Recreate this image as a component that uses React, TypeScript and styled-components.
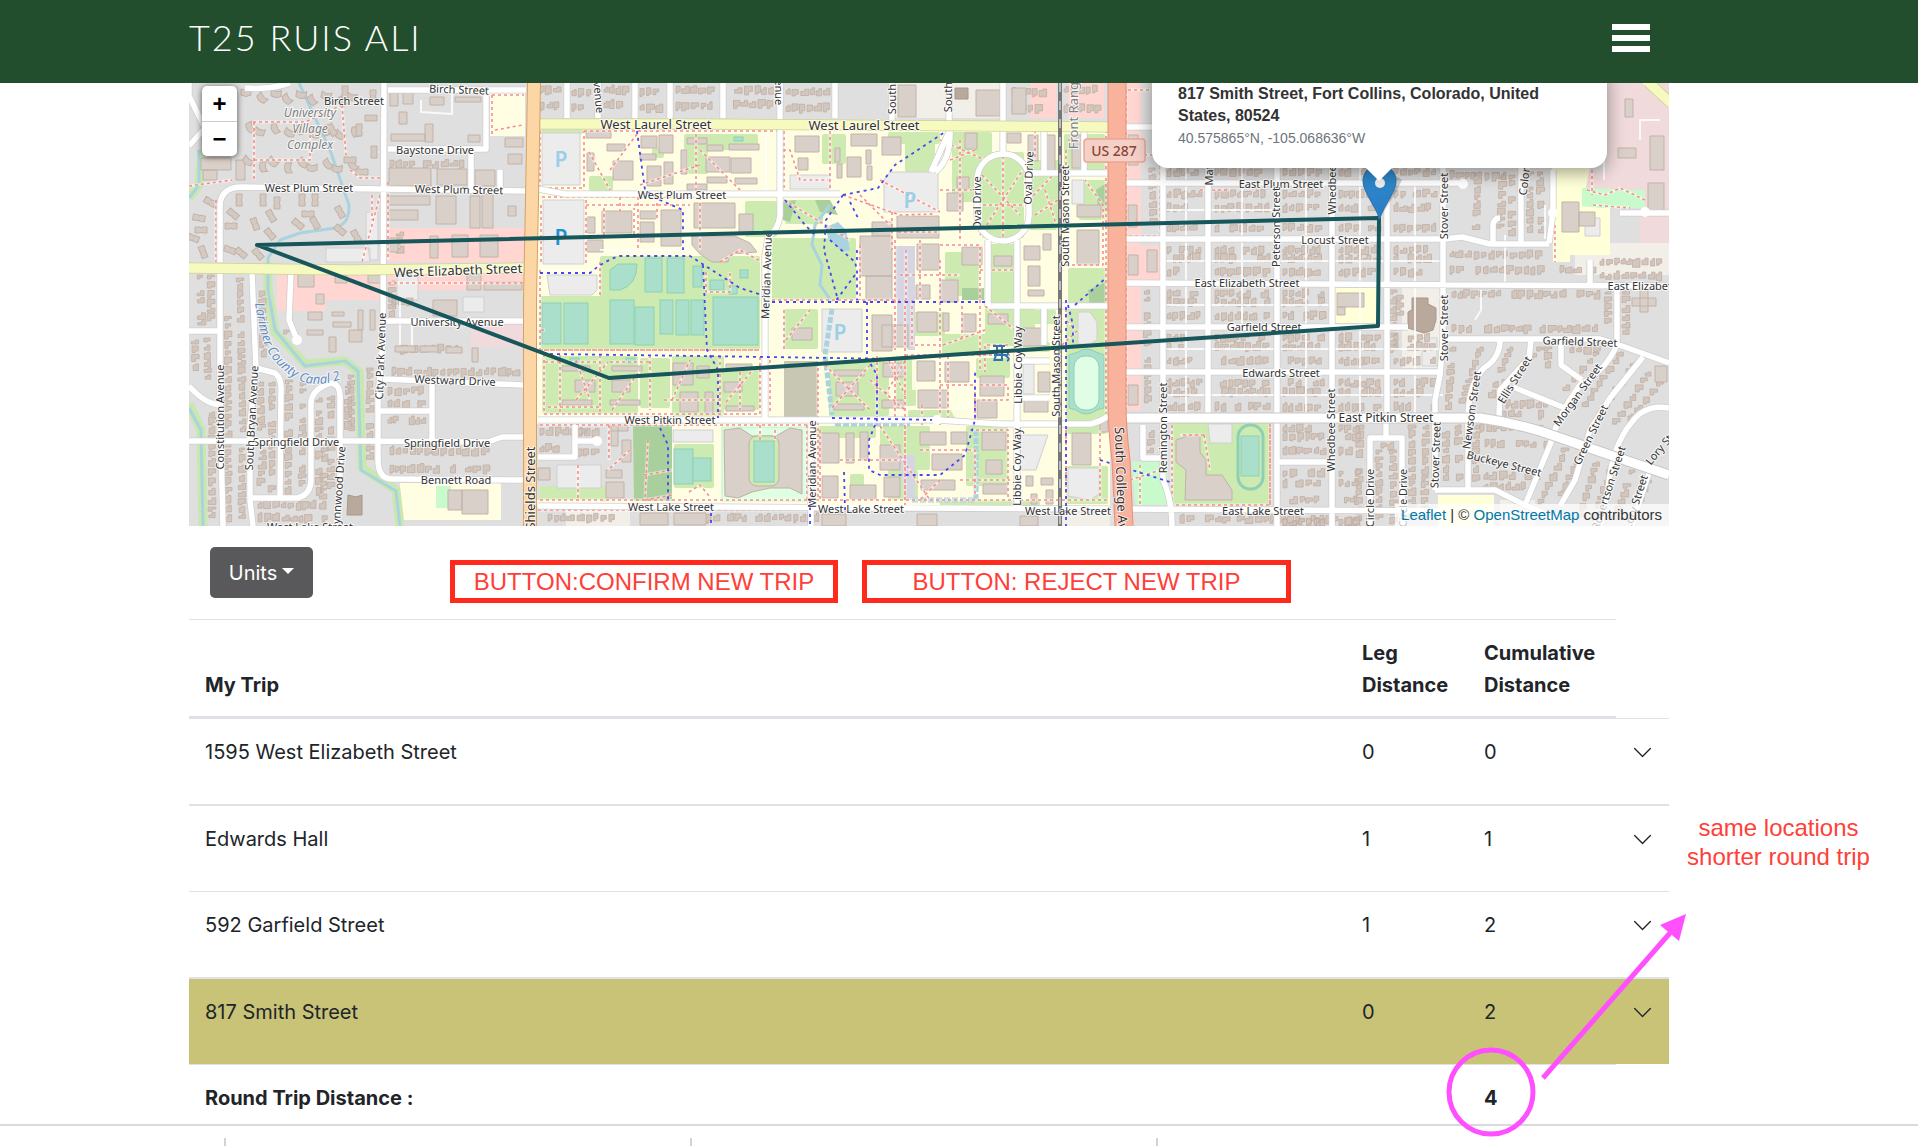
import React from "react";
import styled, { createGlobalStyle, css } from "styled-components";

const GlobalStyle = createGlobalStyle`
  * { box-sizing: border-box; }
  body {
    margin: 0;
    background: #fff;
    color: #212529;
    font-family: Inter, "Liberation Sans", sans-serif;
    font-size: 20px;
    line-height: 32px;
    overflow: hidden;
  }
`;

const gutters = css`
  padding-left: 189px;
  padding-right: 249px;
`;

const Page = styled.div`
  display: flex;
  flex-direction: column;
`;

const Header = styled.header`
  ${gutters}
  display: flex;
  align-items: flex-start;
  justify-content: space-between;
  height: 83px;
  padding-top: 16px;
  background: #224e2d;
  color: #fff;
`;

const Title = styled.h1`
  margin: 0;
  font-family: Lato, "Open Sans", sans-serif;
  font-size: 36px;
  line-height: 42px;
  font-weight: 300;
  letter-spacing: 2px;
`;

const MenuButton = styled.button`
  display: flex;
  flex-direction: column;
  gap: 5px;
  margin: 8px 19px 0 0;
  padding: 0;
  border: 0;
  background: none;
`;

const MenuBar = styled.span`
  width: 38px;
  height: 6px;
  background: #fff;
`;

const Content = styled.main`
  ${gutters}
  display: flex;
  flex-direction: column;
`;

/* ---------- map ---------- */

const MapFrame = styled.section`
  position: relative;
  height: 443px;
  overflow: hidden;
  background: #dfdfdf;
  font-family: "Liberation Sans", Arial, sans-serif;
`;

const MapDrawing = styled.svg`
  display: block;
  width: 100%;
  height: 100%;
`;

const ZoomControl = styled.div`
  position: absolute;
  top: 3px;
  left: 13px;
  display: flex;
  flex-direction: column;
  width: 35px;
  border-radius: 5px;
  background: #fff;
  box-shadow: 0 1px 6px rgba(0, 0, 0, 0.65);
`;

const ZoomButton = styled.button`
  height: 35px;
  padding: 0;
  border: 0;
  background: none;
  color: #000;
  font: bold 24px/34px "Liberation Sans", Arial, sans-serif;

  & + & {
    border-top: 1px solid #ccc;
  }
`;

const Popup = styled.div`
  position: absolute;
  top: -18px;
  right: 62px;
  width: 455px;
  height: 103px;
  padding: 18px 26px 0;
  border-radius: 16px;
  background: #fff;
  box-shadow: 0 4px 18px rgba(0, 0, 0, 0.4);
`;

const PopupTip = styled.svg`
  position: absolute;
  top: 102px;
  left: 213px;
  width: 28px;
  height: 15px;
  fill: #fff;
`;

const PopupClose = styled.button`
  position: absolute;
  top: 3px;
  right: 9px;
  padding: 0;
  border: 0;
  background: none;
  color: #c3c3c3;
  font: bold 20px/18px "Liberation Sans", Arial, sans-serif;
`;

const Address = styled.p`
  margin: 0;
  color: #333;
  font-size: 16px;
  line-height: 22px;
  font-weight: 700;
`;

const Coordinates = styled.p`
  margin: 0;
  color: #6c757d;
  font-size: 14px;
  line-height: 22px;
`;

const Attribution = styled.div`
  position: absolute;
  right: 0;
  bottom: 0;
  padding: 0 7px 0 6px;
  background: rgba(255, 255, 255, 0.7);
  color: #333;
  font-size: 15px;
  line-height: 22px;
`;

const MapLink = styled.a`
  color: #0078a8;
  text-decoration: none;
`;

const StreetLabel = styled.text<{ $size: number }>`
  font-family: "Noto Sans", sans-serif;
  font-size: ${(p) => p.$size}px;
  fill: #333;
  stroke: rgba(255, 255, 255, 0.75);
  stroke-width: 2px;
  paint-order: stroke;
  text-anchor: middle;
  dominant-baseline: central;
`;

const AreaLabel = styled(StreetLabel)<{ $upright?: boolean }>`
  fill: #808080;
  font-style: ${(p) => (p.$upright ? "normal" : "italic")};
`;

const WaterLabel = styled.text`
  font-family: "Noto Sans", sans-serif;
  font-size: 13px;
  font-style: italic;
  fill: #5f8fc4;
  stroke: rgba(255, 255, 255, 0.7);
  stroke-width: 2px;
  paint-order: stroke;
`;

const ParkingLabel = styled.text<{ $strong?: boolean }>`
  font-family: "Noto Sans", sans-serif;
  font-size: 21px;
  font-weight: 600;
  fill: ${(p) => (p.$strong ? "#1b93d6" : "#9bcfe8")};
  text-anchor: middle;
  dominant-baseline: central;
`;

const ShieldLabel = styled.text`
  font-family: "Noto Sans", sans-serif;
  font-size: 14px;
  font-weight: 500;
  fill: #8b4438;
  text-anchor: middle;
  dominant-baseline: central;
`;

type Box = [number, number, number, number];

const random = (seed: number) => {
  let s = seed;
  return () => {
    s = (s * 16807) % 2147483647;
    return s / 2147483647;
  };
};

const rectPath = (x: number, y: number, w: number, h: number) =>
  `M${x.toFixed(1)} ${y.toFixed(1)}h${w.toFixed(1)}v${h.toFixed(1)}h${(-w).toFixed(1)}z`;

const housePath = (x: number, y: number, w: number, h: number, r: () => number) => {
  const n = 1 + r() * Math.min(w, h) * 0.35;
  return r() > 0.5
    ? `M${x.toFixed(1)} ${y.toFixed(1)}h${w.toFixed(1)}v${(h - n).toFixed(1)}h${(-w / 2).toFixed(1)}v${n.toFixed(1)}h${(-w / 2).toFixed(1)}z`
    : `M${x.toFixed(1)} ${(y + n).toFixed(1)}h${(w / 2).toFixed(1)}v${(-n).toFixed(1)}h${(w / 2).toFixed(1)}v${h.toFixed(1)}h${(-w).toFixed(1)}z`;
};

/* A row of houses that runs across. */
const houseRow = (x0: number, x1: number, y: number, seed: number) => {
  const r = random(seed);
  let d = "";
  for (let x = x0; x < x1 - 5; ) {
    const w = 4 + r() * 4;
    const h = 5 + r() * 4;
    if (r() > 0.1) d += housePath(x, y - h / 2 + (r() - 0.5) * 2, Math.min(w, x1 - x), h, r);
    x += w + 1 + r() * 2;
  }
  return d;
};

/* A column of houses that follows a street from top to bottom. */
const houseColumn = (xa: number, y0: number, xb: number, y1: number, seed: number) => {
  const r = random(seed);
  let d = "";
  for (let y = y0; y < y1 - 5; ) {
    const h = 4 + r() * 4;
    const w = 5 + r() * 3;
    const x = xa + ((xb - xa) * (y - y0)) / (y1 - y0);
    if (r() > 0.08) d += housePath(x - w / 2, y, w, h, r);
    y += h + 1 + r() * 2;
  }
  return d;
};

const cityBlocks = (xs: number[], ys: number[]): Box[] =>
  ys.slice(1).flatMap((y, j) =>
    xs.slice(1).map((x, i): Box => [xs[i] + 4, ys[j] + 4, x - xs[i] - 8, y - ys[j] - 8])
  );

const eastBlocks = cityBlocks([1160, 1208, 1276, 1332, 1387, 1443], [83, 127, 183, 239, 283, 327, 372, 418]).filter(
  ([x, y]) => !(x === 1336 && y === 287) && !(x === 1391 && y === 287)
);
const southBlocks = cityBlocks([1276, 1332, 1369], [418, 462, 511, 540]);

const blockHouses = (blocks: Box[]) =>
  blocks
    .map(([x, y, w, h], i) =>
      houseRow(x + 3, x + w - 2, y + 7, i * 37 + 11) +
      houseRow(x + 3, x + w - 2, y + h / 2 - 3, i * 19 + 83) +
      houseRow(x + 3, x + w - 2, y + h - 7, i * 53 + 29)
    )
    .join("");

/* [start x, start y, end x, end y] */
const columns: Box[] = [
  [211, 275, 211, 322], [200, 275, 202, 326], [207, 338, 208, 380], [195, 340, 196, 375], [212, 412, 212, 520],
  [228, 310, 228, 524], [240, 278, 243, 436], [242, 448, 242, 524], [262, 285, 264, 360], [260, 382, 262, 436],
  [263, 450, 260, 492], [272, 382, 272, 492], [289, 380, 288, 492], [303, 382, 302, 490], [319, 398, 319, 494],
  [331, 396, 331, 492], [348, 384, 348, 435], [370, 368, 370, 472], [325, 448, 322, 520], [351, 375, 352, 436],
  [392, 281, 392, 316], [400, 232, 400, 256], [208, 102, 208, 140], [287, 330, 289, 340], [1393, 290, 1393, 362], [1400, 290, 1400, 320],
  [1480, 347, 1458, 410], [1452, 347, 1448, 410], [1510, 347, 1484, 410], [1540, 347, 1500, 385],
  [1548, 347, 1548, 372], [1596, 352, 1560, 392], [1620, 352, 1578, 412], [1634, 362, 1592, 420],
  [1648, 372, 1610, 428], [1660, 382, 1622, 424], [1565, 448, 1536, 510], [1580, 455, 1556, 500],
  [1596, 462, 1578, 520], [1612, 464, 1592, 524], [1632, 470, 1612, 524], [1648, 480, 1628, 524], [1446, 425, 1446, 484],
  [1458, 425, 1460, 484], [1476, 425, 1476, 484], [1360, 425, 1358, 524], [1379, 450, 1379, 524], [1393, 450, 1394, 524],
  [1412, 425, 1412, 524], [1426, 425, 1424, 524], [1478, 172, 1476, 230], [1503, 175, 1500, 232],
  [1512, 175, 1512, 235], [1530, 172, 1530, 232], [1540, 172, 1542, 236], [1608, 290, 1608, 328], [1626, 290, 1626, 340],
  [1147, 290, 1148, 408], [1152, 168, 1154, 232], [1152, 425, 1150, 455],
];

/* [start x, end x, y] */
const rows: [number, number, number][] = [
  [392, 520, 372], [388, 428, 391], [388, 430, 404], [388, 428, 420], [390, 492, 451], [390, 490, 469],
  [395, 462, 349], [258, 320, 505], [258, 330, 518], [390, 466, 164], [1452, 1600, 329], [1452, 1600, 294],
  [1450, 1546, 255], [1450, 1546, 270], [1560, 1600, 270], [1600, 1666, 262], [1600, 1666, 276],
  [1480, 1545, 428], [1485, 1550, 444], [1484, 1540, 476], [1484, 1530, 486], [1506, 1556, 404], [1502, 1548, 414],
  [1375, 1400, 446], [1570, 1606, 349], [1450, 1480, 175], [1485, 1512, 176], [540, 590, 432], [540, 560, 448],
  [578, 604, 432], [578, 604, 452], [548, 620, 518], [690, 820, 518], [1180, 1340, 519], [392, 420, 302],
  [540, 564, 90], [572, 594, 92], [604, 630, 90], [640, 666, 92], [676, 718, 90], [728, 774, 90], [786, 830, 92],
  [540, 564, 106], [572, 594, 108], [604, 630, 104], [640, 666, 108], [676, 718, 106], [728, 774, 104], [786, 830, 108],
  [1064, 1104, 90], [1064, 1104, 108], [1012, 1050, 92], [1012, 1050, 108],
];

const neighbourhoodHouses =
  columns.map(([a, b, c, d], i) => houseColumn(a, b, c, d, i * 71 + 13)).join("") +
  rows.map(([a, b, y], i) => houseRow(a, b, y, i * 97 + 7)).join("") +
  blockHouses(eastBlocks) +
  blockHouses(southBlocks);

const campusBuildings: Box[] = [
  [586, 131, 25, 7], [607, 144, 18, 7], [613, 161, 20, 19], [587, 153, 7, 18], [641, 136, 16, 12], [659, 135, 14, 18],
  [640, 154, 16, 6], [647, 166, 14, 20], [664, 162, 9, 22], [687, 138, 20, 6], [681, 150, 6, 24], [706, 157, 24, 15],
  [731, 158, 20, 15], [707, 145, 16, 6], [729, 144, 30, 6], [707, 177, 20, 6], [735, 178, 22, 6], [687, 184, 20, 6],
  [602, 211, 30, 22], [587, 217, 8, 16], [640, 211, 16, 8], [640, 222, 14, 20], [661, 210, 20, 36], [694, 203, 41, 25],
  [739, 214, 14, 18], [587, 240, 16, 12], [795, 136, 24, 16], [798, 158, 10, 12], [851, 134, 26, 12], [847, 157, 14, 20],
  [835, 148, 5, 14], [866, 150, 5, 14], [837, 164, 5, 14], [867, 166, 5, 14],
  [882, 137, 19, 18], [872, 222, 20, 14], [860, 236, 32, 40], [866, 276, 26, 24], [897, 216, 42, 22],
  [562, 366, 28, 5], [575, 380, 20, 12], [612, 366, 30, 5], [612, 380, 18, 12], [562, 400, 30, 5], [610, 400, 30, 5],
  [673, 363, 20, 22], [697, 366, 12, 12], [680, 392, 18, 20], [705, 392, 8, 22], [724, 382, 18, 10], [726, 364, 26, 5],
  [726, 406, 28, 5], [792, 328, 20, 12], [872, 315, 20, 36], [834, 370, 30, 6], [836, 382, 22, 14], [834, 404, 30, 6],
  [883, 363, 22, 14], [882, 400, 22, 8], [819, 433, 20, 30], [846, 433, 8, 30], [860, 432, 8, 28], [880, 445, 20, 25],
  [822, 476, 16, 22], [850, 485, 26, 14], [884, 477, 16, 20], [610, 425, 18, 6], [622, 440, 9, 22], [611, 426, 7, 20],
  [606, 470, 16, 8], [606, 482, 18, 16], [538, 468, 12, 12], [640, 513, 28, 12], [674, 513, 32, 12], [822, 514, 24, 12],
  [898, 85, 18, 32], [976, 90, 24, 26], [1012, 88, 14, 26], [917, 244, 22, 26], [940, 280, 18, 22], [916, 285, 14, 14],
  [965, 133, 12, 16], [1007, 133, 14, 10], [1028, 135, 10, 26], [1046, 135, 9, 36], [1072, 135, 9, 33], [957, 177, 12, 12],
  [947, 193, 16, 18], [1024, 246, 16, 14], [1028, 266, 12, 20], [1028, 290, 16, 6], [1043, 234, 8, 16], [1077, 230, 22, 35],
  [994, 256, 18, 10], [962, 247, 20, 18], [882, 325, 26, 22], [917, 312, 20, 20], [943, 313, 6, 18], [962, 314, 14, 18],
  [988, 314, 20, 10], [917, 361, 18, 20], [945, 362, 24, 20], [980, 376, 24, 20], [918, 390, 30, 18], [977, 400, 20, 18],
  [1020, 328, 26, 18], [1024, 400, 24, 12], [1038, 372, 12, 20], [920, 432, 26, 13], [951, 432, 16, 12], [982, 432, 24, 18],
  [932, 454, 30, 16], [986, 460, 16, 14], [1072, 433, 19, 32], [921, 480, 34, 10], [983, 484, 24, 10], [1026, 476, 7, 10],
  [1041, 478, 12, 7], [1031, 494, 6, 10], [1046, 490, 7, 14], [917, 514, 20, 12], [1020, 516, 18, 10],
  [1100, 420, 8, 12], [1077, 205, 24, 12], [1128, 135, 10, 30], [1128, 205, 9, 22], [1128, 255, 10, 20], [1128, 385, 10, 20],
  [1147, 250, 10, 22], [1337, 293, 27, 14], [1337, 307, 8, 8], [1562, 202, 17, 30], [1579, 212, 16, 14],
  [1625, 99, 8, 18], [1650, 136, 14, 34], [1648, 183, 16, 30], [1618, 148, 18, 10], [1632, 298, 24, 8], [1640, 290, 8, 22],
  [1655, 366, 12, 16], [201, 158, 30, 12], [203, 170, 14, 10], [236, 160, 9, 20], [389, 168, 42, 18], [437, 169, 30, 16],
  [475, 170, 20, 16], [388, 196, 42, 9], [436, 196, 20, 28], [470, 196, 10, 32], [482, 194, 11, 34], [388, 210, 30, 10],
  [390, 88, 8, 18], [403, 88, 10, 16], [430, 97, 14, 8], [455, 97, 26, 5], [399, 112, 8, 12], [425, 124, 8, 18],
  [391, 134, 34, 7], [468, 135, 12, 7], [505, 138, 18, 9], [508, 154, 14, 10], [508, 206, 8, 10], [433, 300, 24, 16],
  [467, 274, 14, 16], [484, 282, 38, 8], [332, 312, 12, 4], [333, 322, 18, 5], [308, 312, 14, 8], [307, 330, 16, 5],
  [329, 337, 7, 15], [349, 330, 13, 12], [358, 310, 5, 20], [370, 310, 5, 20], [395, 346, 20, 6], [420, 346, 18, 6],
  [446, 347, 16, 6], [472, 348, 6, 14], [480, 235, 18, 22], [452, 235, 16, 22], [430, 236, 8, 22], [388, 238, 10, 14],
  [448, 490, 14, 20], [462, 490, 26, 24], [298, 274, 16, 13], [335, 275, 12, 8], [368, 275, 14, 8], [316, 294, 8, 10],
];

/* Curved apartment buildings of the student village. */
const villageBuildings = Array.from({ length: 27 }, (_, i): [number, number, number] => [
  246 + (i % 9) * 13 + ((i * 7) % 5),
  94 + Math.floor(i / 9) * 34 + ((i * 5) % 9),
  (i * 47) % 90,
]);
const clusterBuildings: [number, number, number][] = [
  [210, 202, 30], [199, 218, 10], [201, 230, 0], [193, 238, 20], [239, 200, 90], [233, 214, 40], [231, 226, 0], [263, 200, 90],
  [277, 203, 90], [271, 216, 60], [255, 224, 70], [270, 234, 50], [302, 200, 90], [315, 200, 90], [308, 214, 0], [298, 224, 40],
  [315, 223, 60], [340, 212, 60], [230, 250, 20], [241, 253, 40], [258, 254, 50], [203, 252, 70], [340, 230, 40], [356, 236, 60],
  [350, 160, 0], [359, 130, 90], [371, 118, 0], [373, 96, 90], [332, 130, 60], [362, 172, 0], [374, 152, 90], [345, 92, 90],
];

const lawns: Box[] = [
  [540, 296, 220, 54], [600, 256, 160, 42], [772, 238, 84, 62], [785, 200, 38, 24], [589, 176, 24, 15], [745, 201, 32, 36],
  [684, 134, 74, 16], [688, 148, 20, 26], [652, 148, 12, 10], [540, 130, 44, 4], [542, 356, 96, 58], [640, 358, 30, 50],
  [672, 356, 52, 60], [724, 370, 36, 40], [784, 309, 34, 40], [829, 362, 60, 54], [822, 134, 24, 30], [888, 132, 52, 12],
  [905, 142, 30, 30], [952, 132, 40, 70], [982, 152, 42, 86], [1029, 160, 30, 70], [1064, 134, 42, 40], [1079, 180, 28, 40],
  [1068, 268, 40, 38], [945, 252, 34, 44], [990, 244, 26, 60], [905, 312, 40, 24], [942, 334, 48, 22], [985, 306, 50, 40],
  [1066, 308, 42, 112], [674, 444, 40, 44], [880, 426, 50, 44], [816, 426, 60, 12], [966, 426, 42, 60], [1066, 466, 42, 38],
  [1030, 310, 26, 14], [908, 410, 60, 12], [976, 358, 34, 20], [896, 356, 20, 50], [602, 486, 4, 16], [540, 486, 62, 14],
  [940, 500, 100, 6], [1020, 342, 30, 10], [888, 470, 30, 30], [850, 474, 14, 24], [1172, 423, 98, 82], [1066, 420, 40, 14],
];

const pitches: Box[] = [
  [645, 258, 17, 34], [667, 258, 17, 35], [693, 266, 9, 21], [542, 303, 19, 41], [564, 303, 24, 41], [610, 300, 24, 44],
  [635, 307, 19, 38], [660, 300, 13, 34], [676, 300, 13, 35], [691, 300, 13, 35], [713, 297, 45, 48], [674, 449, 19, 35],
  [693, 458, 18, 23], [570, 358, 9, 5], [626, 358, 9, 5], [710, 280, 14, 10], [729, 286, 8, 8], [734, 137, 9, 4],
  [740, 270, 8, 8],
];

const minorRoads = [
  "M220 262V205Q221 188 240 187L525 191", "M189 83V96L205 128 189 146M245 88Q270 90 290 83", "M220 270V400L223 526",
  "M384 83L383 340 378 400V462Q379 479 392 479L524 480", "M388 90H526M388 149H486V90M471 149V190M500 170V190",
  "M252 273L256 368 250 425V500L253 526M256 368L275 373Q282 378 281 392L280 497M252 498H298Q311 494 311 480V402Q313 388 331 383 341 384 340 400V480L336 526",
  "M189 441H378L488 442 502 437H524M189 331H220M189 386Q205 404 220 405M386 321H524M383 379L524 385M378 411H432M432 382V441M291 270L289 320 297 340",
  "M567 83V118M598 83V118M635 83V118M670 83V118M723 83V118M780 83V215Q779 228 768 238L765 255V420M835 83V118M892 83V120M949 83V122M1003 83V152",
  "M538 189L565 194H840M538 420H937L1000 424H1090Q1100 422 1108 416M538 506L1108 509M811 421V526",
  "M977 180A26 26 0 0 1 1029 180V215A26 26 0 0 1 977 215ZM1044 130V173M1084 130V173M1029 173H1108M988 240V306M1017 240V509M988 306H1108M931 172L949 132M935 172Q951 160 950 130",
  "M1126 127H1160M1163 83V480Q1172 500 1172 526M1208 83V418M1277 83V526M1332 83V526M1387 83V418M1443 83V339L1440 375 1435 400V490",
  "M1126 183H1463M1126 239H1444L1462 237 1490 244H1549M1126 283L1669 286M1126 327H1408M1126 372H1440M1275 462H1332M1126 509L1440 511M1143 425V458H1160",
  "M1443 339H1600L1625 347 1669 363M1617 285V345M1500 340Q1500 358 1484 368 1468 385 1468 420V490M1531 340L1529 358 1500 390 1499 416M1513 387L1565 408M1617 345Q1606 370 1580 385 1558 415 1550 445L1525 505M1561 342V365L1582 380",
  "M1643 357L1610 398 1590 430 1575 480 1560 506M1669 408Q1645 404 1632 422 1612 445 1608 490L1600 526M1650 470L1640 500 1632 526M1435 490H1495L1525 505 1560 520M1370 526V438H1402V526M1386 418V438",
  "M1521 168V243M1493 243V225Q1494 218 1500 218M1553 170V212L1549 243M1590 260V285M1620 213H1669",
  "M538 457H575V425M575 441H597M1044 306V345M1020 361H1050M1020 398H1050",
].join("");

const lanes =
  "M1160 155H1277M1160 210H1277M1160 261H1443M1160 305H1332M1160 349H1443M1160 395H1443M1186 83V418M1242 127V327M1306 83V418M1360 83V418M1415 183V418M1505 235V283M1481 290V310L1475 320M421 100V112L452 114V90M540 270H584M688 195V250H600M766 130V190M400 300V345M412 320V345M1545 205V239M1604 110V180M1640 140V120H1660";

const footways = [
  "M540 131V188H584V131M542 197H690M586 200V265M540 270V350H760M540 350H765M544 354V414H760V356M584 131H780M620 197V212M638 197V250M657 197V220M696 134V190M589 152L610 190M610 170L640 130M640 185L700 165M700 150L740 190",
  "M784 131V190M784 200L850 240M783 150H790L800 180H828M830 131V190M843 195L900 215 935 214M860 195L890 225M880 180L940 212M892 212V250M895 240V350M772 300H900M860 245V300",
  "M560 355V412M576 360L590 400M600 355V412M576 400L608 362M612 410L640 370M650 355V410M672 400L690 360M664 400H720M720 356V412M740 372V410M726 402L756 366M784 310V350M786 340L810 310M818 362V500M770 360V412",
  "M825 365L870 410M870 365L830 410M877 356V425M889 361L905 395M905 361L885 395M905 300V500M905 355H1010M940 260V425M980 300V370M962 306V340M940 385H975V425M905 420H935",
  "M1003 150V243M977 205H1029M980 235L1026 165M982 175L1020 215M1029 200L1058 170M960 140V240M940 190H977M1035 130V160M1045 190L1058 230M940 245H980V300M920 240V300M980 270H1015M900 275H960",
  "M1066 265H1103V205L1085 180M1066 303V320L1075 330M1062 345L1078 330M1106 130V415M1126 90V410M1129 236H1162M1129 285H1200M1160 130V232M1126 155H1160",
  "M820 430V500M840 460H900M880 426L930 500M905 425V505M920 450H975V495M960 480H1010M970 430H1008V500M1020 426V500M1066 430V500H1100V430M940 480L920 500",
  "M540 500H1108M538 510H1108M540 425H815M648 440L645 500 672 495M644 475L672 470M689 492L700 485 710 497M578 465V500M807 425V500M609 425V460M630 450L608 470",
  "M541 205V262M586 205H690M604 208V236H634V208M700 197V250M720 262L740 250 762 262M706 272V292H730V272M600 262V295M775 430V440M760 425V440M898 232H940M906 250V300M912 300V345H940M943 345L985 330M985 306L1015 330M1008 345H985V372",
  "M940 140L985 160M950 160L975 150M1035 215L1058 200M1068 140H1100M1070 225H1100M1066 150V172M895 360V420M870 380L905 410M948 356V420M980 385H1008V400H980M922 405V425M545 362H600M610 362H650M548 407H600",
  "M1172 425V505H1270V425M1204 435H1180M1204 435L1210 470M1130 480L1160 470M1140 465V505M1200 190L1230 190",
  "M189 186L232 180M253 122H305L342 105M254 122V180M254 160H310V130M342 105L346 155M350 170L360 178H384M216 200V262M388 182V260M380 195L368 240 362 262M388 283H524M372 195V220M492 95H524M492 95V136M495 130L523 125",
  "M525 420V520M541 330H545M1587 190L1605 195 1620 188 1645 200M1593 205L1630 208M1592 170V195M1555 225V262M1270 424V505M1128 90H1150M388 90H430",
].join("");

const cycleways = [
  "M540 273L590 273Q605 260 620 256H690L740 288 765 296M703 265L707 350 718 370V418M550 354L700 356 900 359M637 131L645 190 660 200 683 210V250M785 200L805 225 815 235",
  "M843 195L826 220 824 250 838 300M850 202L858 218M830 240L855 262 857 270V300M857 250V262M855 275L835 302M772 302H985",
  "M843 195L878 188 895 165 945 132M867 302V358L877 375V420L869 440V470L880 475H940L965 455 975 420V370M832 418L937 420M660 428L668 445V500M711 506V526M844 472L845 510M1066 300V526M1068 305L1073 325V345L1066 350M1075 305L1106 278M1100 460L1170 482M810 500V526",
].join("");

/* Name, centre, angle and, where it is not 11, type size. */
const streetNames: [string, number, number, number, number?][] = [
  ["Birch Street", 354, 101, 0], ["Birch Street", 459, 90, 2], ["West Plum Street", 309, 188, 0],
  ["West Plum Street", 459, 190, 1], ["Baystone Drive", 435, 150, 0], ["West Elizabeth Street", 458, 271, -2, 13],
  ["University Avenue", 457, 322, 0], ["Westward Drive", 455, 381, 2], ["Springfield Drive", 296, 442, 0],
  ["Springfield Drive", 447, 443, 0], ["Bennett Road", 456, 480, 0], ["Constitution Avenue", 220, 417, -90],
  ["South Bryan Avenue", 252, 418, -87], ["City Park Avenue", 381, 356, -88], ["Lynnwood Drive", 339, 488, -86],
  ["Shields Street", 531, 488, -90, 13], ["West Lake Street", 310, 527, 0], ["Avenue", 598, 94, 85], ["Avenue", 778, 86, 90],
  ["West Laurel Street", 656, 125, 0, 13], ["West Laurel Street", 864, 126, 0, 13], ["West Plum Street", 682, 195, 0],
  ["South", 892, 99, -90], ["South", 948, 97, -90], ["Meridian Avenue", 767, 275, -88], ["West Pitkin Street", 670, 420, 0],
  ["West Lake Street", 671, 507, 0], ["Meridian Avenue", 812, 464, -90], ["West Lake Street", 861, 509, 0],
  ["Oval Drive", 977, 203, -90], ["Oval Drive", 1029, 178, -88], ["South Mason Street", 1065, 216, -90],
  ["South Mason Street", 1056, 366, -90], ["Mathews", 1209, 162, -90], ["East Plum Street", 1281, 184, 0],
  ["Peterson Street", 1276, 227, -90], ["Whedbee", 1332, 190, -90], ["Locust Street", 1335, 240, 0],
  ["East Elizabeth Street", 1247, 283, 0], ["East Elizabeth Street", 1660, 286, 0], ["Stover Street", 1444, 206, -90],
  ["Stover Street", 1444, 328, -90], ["Colorado", 1526, 172, -83], ["Libbie Coy Way", 1018, 365, -90],
  ["Libbie Coy Way", 1017, 467, -90], ["West Lake Street", 1068, 511, 0], ["South College Avenue", 1121, 494, 88, 13],
  ["Remington Street", 1163, 428, -90], ["Edwards Street", 1281, 373, 0], ["Garfield Street", 1264, 327, 0],
  ["East Lake Street", 1263, 511, 0], ["Garfield Street", 1580, 342, 2], ["East Pitkin Street", 1386, 418, 0, 12],
  ["Whedbee Street", 1331, 430, -90], ["Newsom Street", 1472, 410, -82], ["Ellis Street", 1515, 380, -58],
  ["Morgan Street", 1578, 395, -54], ["Green Street", 1591, 435, -64], ["Buckeye Street", 1504, 464, 14],
  ["Stover Street", 1436, 455, -88], ["Circle Drive", 1370, 498, -90], ["Circle Drive", 1403, 498, -90],
  ["Robertson Street", 1609, 488, -72], ["Lory Street", 1666, 442, -50], ["Lory Street", 1636, 502, -72],
];

const CampusMap = () => (
  <MapDrawing viewBox="189 83 1480 443" preserveAspectRatio="xMidYMid slice" role="img" aria-label="Map of the trip">
    <defs>
      <linearGradient id="pin" x1="0" y1="0" x2="0" y2="1">
        <stop offset="0" stopColor="#2e8bc9" />
        <stop offset="1" stopColor="#2a7cc6" />
      </linearGradient>
      <path id="canalText" d="M255 303Q260 338 268 352 282 374 306 383 330 387 354 373" />
    </defs>

    <rect x="189" y="83" width="1480" height="443" fill="#dfdfdf" />

    {/* land use */}
    <path fill="#fffee3" d="M536 130H1110V506H536ZM490 93H525V136H490ZM400 483H501V520H400Z" />
    <path fill="#dfdfdf" d="M536 424H634V500H536Z" />
    <path fill="#f2efe9" d="M566 510H630V526H566ZM1062 512H1110V526H1062ZM895 83H1000V118H895ZM1402 288H1440V368H1402ZM1575 243H1669V275H1575ZM1500 500H1535V526H1500Z" />
    <path fill="#ffd6d1" d="M277 273H325V290L326 311H277ZM325 273H383V300H325ZM386 228H525V262H386ZM388 273H524V290H388ZM1127 83H1141V410H1127ZM1141 246H1160V280H1141ZM1030 83H1056V118H1030ZM1068 83H1104V118H1068Z" />
    <path fill="#f0dadb" d="M471 321H524V347H471ZM1607 83H1669V243H1640V208H1582V172H1607Z" />
    <path fill="#ffffd8" d="M1552 168H1590L1582 206 1610 208V255H1570V262H1553ZM1335 288H1380V323H1335ZM1438 495H1494V526H1438Z" />
    <path fill="#c8facc" d="M1582 188L1645 190V208H1600L1582 206ZM1132 462H1168V505H1135ZM436 486H451V508H436Z" />
    {lawns.map(([x, y, w, h], i) => (
      <rect key={i} x={x} y={y} width={w} height={h} rx="2" fill="#cdebb0" />
    ))}
    <path fill="#a9cf9c" d="M633 425H672V501H634ZM783 202L796 200 790 222 783 220ZM815 200L830 200 838 215 820 212ZM1096 190L1108 182V212L1098 208ZM962 288H984V300H962ZM1088 290L1106 282V306H1090Z" />
    <path fill="#c7c7b4" d="M784 361H818V417H784Z" />
    <path fill="#ffffe5" d="M858 190L880 190 890 212 870 205ZM690 488H714V500H690ZM912 338L980 384 976 420 955 418 940 390H912Z" opacity=".9" />
    <path fill="#d5d6e2" d="M895 246H915V300H895ZM897 300H915V350H908L897 330ZM899 455H915V500H905Z" />

    {/* car parks */}
    <path
      fill="#ececec"
      stroke="#d0d0d0"
      d="M542 133H580V185H542ZM543 200H584V264H543ZM547 275H597V290L592 295H550ZM822 309H862V352H822ZM890 172H938V212H884V180ZM673 430H713V442H673ZM557 465H601V488H557ZM790 175H830V189H790ZM1072 180H1084V204H1072ZM1078 312L1090 312 1097 322V340L1090 344H1078ZM1068 468H1099V494L1090 500 1068 496ZM1020 435H1048L1036 470H1020ZM1023 364H1034V394H1023ZM1208 424H1232V443H1210ZM1422 338H1437V366H1422ZM1585 218H1600V236H1585ZM366 212H378V230L378 260H370L366 235ZM326 248H370V262H326ZM397 273H418V300H397ZM463 297H484V312H463Z"
    />

    {/* sports */}
    {pitches.map(([x, y, w, h], i) => (
      <rect key={i} x={x} y={y} width={w} height={h} fill="#aae0cb" stroke="#8ecfb5" />
    ))}
    <path fill="#aae0cb" stroke="#8ecfb5" d="M610 270L618 264H637Q637 285 620 290H610Z" />
    <rect x="722" y="427" width="85" height="74" fill="#dfffe2" stroke="#c2eec8" />
    <path fill="#d9d0c9" stroke="#bfb0a6" d="M724 430L740 428 752 436H776L790 428 802 430V494L790 488H770L752 492 738 498 725 496Z" />
    <rect x="749" y="436" width="30" height="50" rx="8" fill="#cdebb0" stroke="#bfb0a6" />
    <rect x="754" y="441" width="20" height="41" fill="#aae0cb" stroke="#8ecfb5" />
    <path fill="#aae0cb" stroke="#8ecfb5" d="M1069 355L1078 352Q1086 346 1096 352L1104 355V408L1097 410Q1086 418 1076 410L1069 408Z" />
    <rect x="1074" y="356" width="25" height="54" rx="11" fill="#e0fde5" stroke="#8ecfb5" />
    <rect x="1238" y="425" width="25" height="64" rx="12" fill="#cdebb0" stroke="#8ecfb5" strokeWidth="3" />
    <rect x="1241" y="436" width="18" height="40" fill="#aae0cb" stroke="#8ecfb5" />

    {/* water */}
    <g fill="none" strokeLinejoin="round">
      <path stroke="#c8e8ae" strokeWidth="9" d="M268 262V290L275 332 305 364 345 361 359 372 362 468 396 490 400 526M189 404L201 430 203 526M202 150L199 185 189 198" />
      <path stroke="#aad3df" strokeWidth="3" d="M299 83L330 150 349 205Q350 224 335 228L300 233 280 240 268 258V290L275 330 305 366 345 361 358 371 361 470 396 491 400 526M189 408L201 430 203 526M199 150L199 185 189 198M830 205L815 225 812 245 822 265 820 285 832 302" />
      <path stroke="#aad3df" strokeWidth="5" strokeDasharray="6 2" d="M832 309L825 355 832 415M835 424H910M976 430V500H910" />
    </g>
    <path fill="#aad3df" d="M826 227L838 222 846 230 850 250 842 252 828 238Z" />

    {/* buildings */}
    <path d={neighbourhoodHouses} fill="#d3c6bd" stroke="#bfaea3" strokeWidth=".8" />
    <path fill="#d9d0c9" stroke="#c2b2a8" d={campusBuildings.map((b) => rectPath(...b)).join("")} />
    <path fill="#d9d0c9" stroke="#c2b2a8" d="M692 236H735L750 243 757 252 730 254 728 262 712 262 700 254 692 245ZM1176 440L1190 435H1200V452L1206 460 1206 475H1222L1232 490V500H1185L1186 470 1176 462Z" />
    <path fill="#b9a99c" stroke="#a8968a" d="M1412 298H1428V304L1436 308V320L1433 330 1424 333 1408 328V312L1412 310ZM955 88H968V99H955ZM348 495L356 497 362 495V515H347Z" />
    {villageBuildings.map(([x, y, a], i) => (
      <path key={i} d="M-5-5Q1-2 5-5V1Q0 4-5 1Z" transform={`translate(${x} ${y}) rotate(${a})`} fill="#d5cac2" stroke="#c2b2a8" />
    ))}
    {clusterBuildings.map(([x, y, a], i) => (
      <path key={i} d="M-6-3H-1L0-2 1-3H6V3H1L0 2-1 3H-6Z" transform={`translate(${x} ${y}) rotate(${a})`} fill="#d5cac2" stroke="#c2b2a8" />
    ))}

    {/* paths and streets */}
    <g fill="none" strokeLinejoin="round">
      <path d={lanes} stroke="#fff" strokeWidth="2" opacity=".8" />
      <path d={footways} stroke="#fff" strokeWidth="3" opacity=".5" />
      <path d={footways} stroke="#fa8d83" strokeWidth="1.6" strokeDasharray="3 3" />
      <path d={minorRoads} stroke="#cfcfcf" strokeWidth="7" />
      <path d={minorRoads} stroke="#fff" strokeWidth="5.5" />
      <path d={cycleways} stroke="#4747ee" strokeWidth="1.8" strokeDasharray="3 4" />
      <path d="M1126 418H1480Q1510 422 1540 431L1610 455 1669 475" stroke="#c8c8c8" strokeWidth="11" />
      <path d="M1120 418H1480Q1510 422 1540 431L1610 455 1669 475" stroke="#fff" strokeWidth="9" />
      <path d="M189 268L350 270 524 268M538 124L700 124 1108 127M1648 82L1672 104" stroke="#cfd09a" strokeWidth="11" />
      <path d="M189 268L350 270 524 268M538 124L700 124 1108 127M1646 80L1674 106" stroke="#f7fabf" strokeWidth="9.5" />
      <path d="M1060 83V526" stroke="#777" strokeWidth="4" />
      <path d="M1060 83V526" stroke="#bdbdbd" strokeWidth="2" strokeDasharray="9 9" />
      <path d="M534 83L532 200 530 300V526" stroke="#d2a26a" strokeWidth="14" />
      <path d="M534 83L532 200 530 300V526" stroke="#fcd6a4" strokeWidth="12" />
      <path d="M1117 83V400Q1117 430 1121 460L1124 526" stroke="#e5907c" strokeWidth="19" />
      <path d="M1117 83V400Q1117 430 1121 460L1124 526" stroke="#f9b29c" strokeWidth="17" />
    </g>
    <g fill="#fff">
      <circle cx="297" cy="340" r="5" />
      <circle cx="1463" cy="184" r="5" />
      <circle cx="597" cy="441" r="5" />
      <circle cx="937" cy="420" r="5" />
      <circle cx="1553" cy="213" r="5" />
      <circle cx="1645" cy="212" r="5" />
    </g>
    <path d="M993 346H1005M997 346V352L994 361M1002 346V361M1006 350Q1010 353 1006 356 1011 359 1007 361M994 355H1006M995 360H1003" fill="none" stroke="#3173b3" strokeWidth="2" />

    {/* labels */}
    <AreaLabel $size={12} x="310" y="112">University</AreaLabel>
    <AreaLabel $size={12} x="310" y="128">Village</AreaLabel>
    <AreaLabel $size={12} x="310" y="144">Complex</AreaLabel>
    <WaterLabel>
      <textPath href="#canalText">Larimer County Canal 2</textPath>
    </WaterLabel>
    <AreaLabel $size={13} $upright y="-1" transform="translate(1074 112) rotate(-90)">
      Front Range
    </AreaLabel>
    {streetNames.map(([name, x, y, angle, size = 11], i) => (
      <StreetLabel key={i} $size={size} y="-1" transform={`translate(${x} ${y}) rotate(${angle})`}>
        {name}
      </StreetLabel>
    ))}
    <rect x="1084" y="139" width="61" height="23" rx="3" fill="#f4d0c7" stroke="#e7a798" strokeWidth="1.5" />
    <ShieldLabel x="1114" y="150">US 287</ShieldLabel>
    <ParkingLabel x="561" y="159">P</ParkingLabel>
    <ParkingLabel x="561" y="237" $strong>P</ParkingLabel>
    <ParkingLabel x="840" y="332">P</ParkingLabel>
    <ParkingLabel x="910" y="200">P</ParkingLabel>

    {/* route and marker */}
    <path d="M257 245L1379 218 1378 326 609 378Z" fill="none" stroke="#17565a" strokeWidth="4" strokeLinejoin="round" />
    <path d="M1380 218L1396 192 1402 180 1390 172Z" fill="#000" opacity=".18" />
    <path
      d="M1379 219C1378 212 1373 206 1368 196 1365 190 1363 186 1363 181A16 16 0 0 1 1396 181C1396 186 1394 190 1391 196 1386 206 1381 212 1380 219Z"
      fill="url(#pin)"
      stroke="#2b70ad"
    />
    <circle cx="1380" cy="183" r="5" fill="#eee" />
  </MapDrawing>
);

/* ---------- toolbar ---------- */

const Toolbar = styled.div`
  display: flex;
  align-items: flex-start;
  height: 93px;
  padding: 21px 21px 0;
`;

const UnitsButton = styled.button`
  display: flex;
  align-items: center;
  justify-content: center;
  gap: 5px;
  width: 103px;
  height: 51px;
  padding: 0;
  border: 0;
  border-radius: 5px;
  background: #59595b;
  color: #fff;
  font: inherit;
`;

const Caret = styled.span`
  margin-bottom: 4px;
  border: 6px solid transparent;
  border-top-color: #fff;
  border-bottom: 0;
`;

const TripActions = styled.div`
  display: flex;
  gap: 24px;
  margin-left: 137px;
  padding-top: 13px;
`;

const OutlineButton = styled.button<{ $width: number }>`
  width: ${(p) => p.$width}px;
  height: 43px;
  padding: 0;
  border: 5px solid #ff2a1c;
  background: #fff;
  color: #ff4038;
  font: 24px/32px "Liberation Sans", Arial, sans-serif;
`;

/* ---------- trip table ---------- */

const TripArea = styled.section`
  position: relative;
`;

const TripTable = styled.table`
  width: 100%;
  table-layout: fixed;
  border-collapse: separate;
  border-spacing: 0;
  text-align: left;
`;

const Column = styled.col<{ $width?: number }>`
  width: ${(p) => (p.$width ? `${p.$width}px` : "auto")};
`;

const HeadCell = styled.th`
  height: 100px;
  padding: 17px 10px 15px 16px;
  border-top: 1px solid #dee2e6;
  border-bottom: 3px solid #dee2e6;
  vertical-align: bottom;
  font-weight: 700;
`;

const HeadSpacer = styled.td`
  padding: 0;
  border-bottom: 1px solid #dee2e6;
`;

const TripRow = styled.tr<{ $line: number; $home?: boolean }>`
  background: ${(p) => (p.$home ? "#c8c377" : "transparent")};

  & > td {
    height: ${(p) => 85 + p.$line}px;
    border-top: ${(p) => p.$line}px solid #dee2e6;
  }
`;

const Cell = styled.td`
  padding: 17px 16px 16px;
  vertical-align: top;
`;

const ToggleCell = styled.td`
  padding: 21px 0 0;
  vertical-align: top;
  text-align: center;
`;

const ToggleButton = styled.button`
  display: inline-flex;
  padding: 0;
  border: 0;
  background: none;
  color: #212529;
`;

const TotalCell = styled.th`
  height: 60px;
  padding: 17px 16px 10px;
  border-top: 1px solid #dee2e6;
  vertical-align: top;
  font-weight: 700;
`;

const Remark = styled.p`
  position: absolute;
  top: 194px;
  left: calc(100% + 1px);
  width: 217px;
  margin: 0;
  color: #ff4038;
  font: 24px/29px "Liberation Sans", Arial, sans-serif;
  text-align: center;
`;

const Markup = styled.svg`
  position: absolute;
  top: 285px;
  right: -20px;
  width: 250px;
  height: 240px;
  overflow: visible;
  pointer-events: none;
`;

const Footer = styled.footer`
  ${gutters}
  height: 22px;
  border-top: 2px solid #d9dadb;
`;

const FooterColumns = styled.div`
  display: grid;
  grid-template-columns: repeat(3, 1fr);
  padding: 12px 47px 0 35px;
`;

const FooterColumn = styled.div`
  height: 8px;
  border-left: 2px solid #d2d3d4;
`;

const trip = [
  { place: "1595 West Elizabeth Street", leg: 0, total: 0, line: 0 },
  { place: "Edwards Hall", leg: 1, total: 1, line: 2 },
  { place: "592 Garfield Street", leg: 1, total: 2, line: 1 },
  { place: "817 Smith Street", leg: 0, total: 2, line: 2, home: true },
];

const Chevron = () => (
  <svg width="21" height="21" viewBox="0 0 16 16" fill="currentColor" aria-hidden="true">
    <path d="M1.646 4.646a.5.5 0 0 1 .708 0L8 10.293l5.646-5.647a.5.5 0 0 1 .708.708l-6 6a.5.5 0 0 1-.708 0l-6-6a.5.5 0 0 1 0-.708z" />
  </svg>
);

export default function App() {
  return (
    <>
      <GlobalStyle />
      <Page>
        <Header>
          <Title>T25 RUIS ALI</Title>
          <MenuButton aria-label="Menu">
            <MenuBar />
            <MenuBar />
            <MenuBar />
          </MenuButton>
        </Header>

        <Content>
          <MapFrame>
            <CampusMap />
            <ZoomControl>
              <ZoomButton aria-label="Zoom in">+</ZoomButton>
              <ZoomButton aria-label="Zoom out">−</ZoomButton>
            </ZoomControl>
            <Popup>
              <PopupClose aria-label="Close">×</PopupClose>
              <Address>817 Smith Street, Fort Collins, Colorado, United States, 80524</Address>
              <Coordinates>40.575865°N, -105.068636°W</Coordinates>
              <PopupTip viewBox="0 0 28 15" aria-hidden="true">
                <path d="M0 0H28L14 14Z" />
              </PopupTip>
            </Popup>
            <Attribution>
              <MapLink href="#leaflet">Leaflet</MapLink> | © <MapLink href="#osm">OpenStreetMap</MapLink> contributors
            </Attribution>
          </MapFrame>

          <Toolbar>
            <UnitsButton aria-haspopup="menu">
              Units
              <Caret />
            </UnitsButton>
            <TripActions>
              <OutlineButton $width={388}>BUTTON:CONFIRM NEW TRIP</OutlineButton>
              <OutlineButton $width={429}>BUTTON: REJECT NEW TRIP</OutlineButton>
            </TripActions>
          </Toolbar>

          <TripArea>
            <TripTable>
              <colgroup>
                <Column />
                <Column $width={122} />
                <Column $width={148} />
                <Column $width={53} />
              </colgroup>
              <thead>
                <tr>
                  <HeadCell>My Trip</HeadCell>
                  <HeadCell>Leg Distance</HeadCell>
                  <HeadCell>Cumulative Distance</HeadCell>
                  <HeadSpacer />
                </tr>
              </thead>
              <tbody>
                {trip.map((stop) => (
                  <TripRow key={stop.place} $line={stop.line} $home={stop.home}>
                    <Cell>{stop.place}</Cell>
                    <Cell>{stop.leg}</Cell>
                    <Cell>{stop.total}</Cell>
                    <ToggleCell>
                      <ToggleButton aria-label={`Options for ${stop.place}`}>
                        <Chevron />
                      </ToggleButton>
                    </ToggleCell>
                  </TripRow>
                ))}
              </tbody>
              <tfoot>
                <tr>
                  <TotalCell colSpan={2}>Round Trip Distance :</TotalCell>
                  <TotalCell>4</TotalCell>
                </tr>
              </tfoot>
            </TripTable>
            <Remark>
              same locations
              <br />
              shorter round trip
            </Remark>
            <Markup viewBox="1439 904 250 240" aria-hidden="true">
              <circle cx="1491" cy="1092" r="42" fill="none" stroke="#ff4fff" strokeWidth="5" />
              <path d="M1543 1078L1670 933" stroke="#ff4fff" strokeWidth="5" />
              <path d="M1686 914L1679 941 1660 925Z" fill="#ff4fff" />
            </Markup>
          </TripArea>
        </Content>

        <Footer>
          <FooterColumns>
            <FooterColumn />
            <FooterColumn />
            <FooterColumn />
          </FooterColumns>
        </Footer>
      </Page>
    </>
  );
}
